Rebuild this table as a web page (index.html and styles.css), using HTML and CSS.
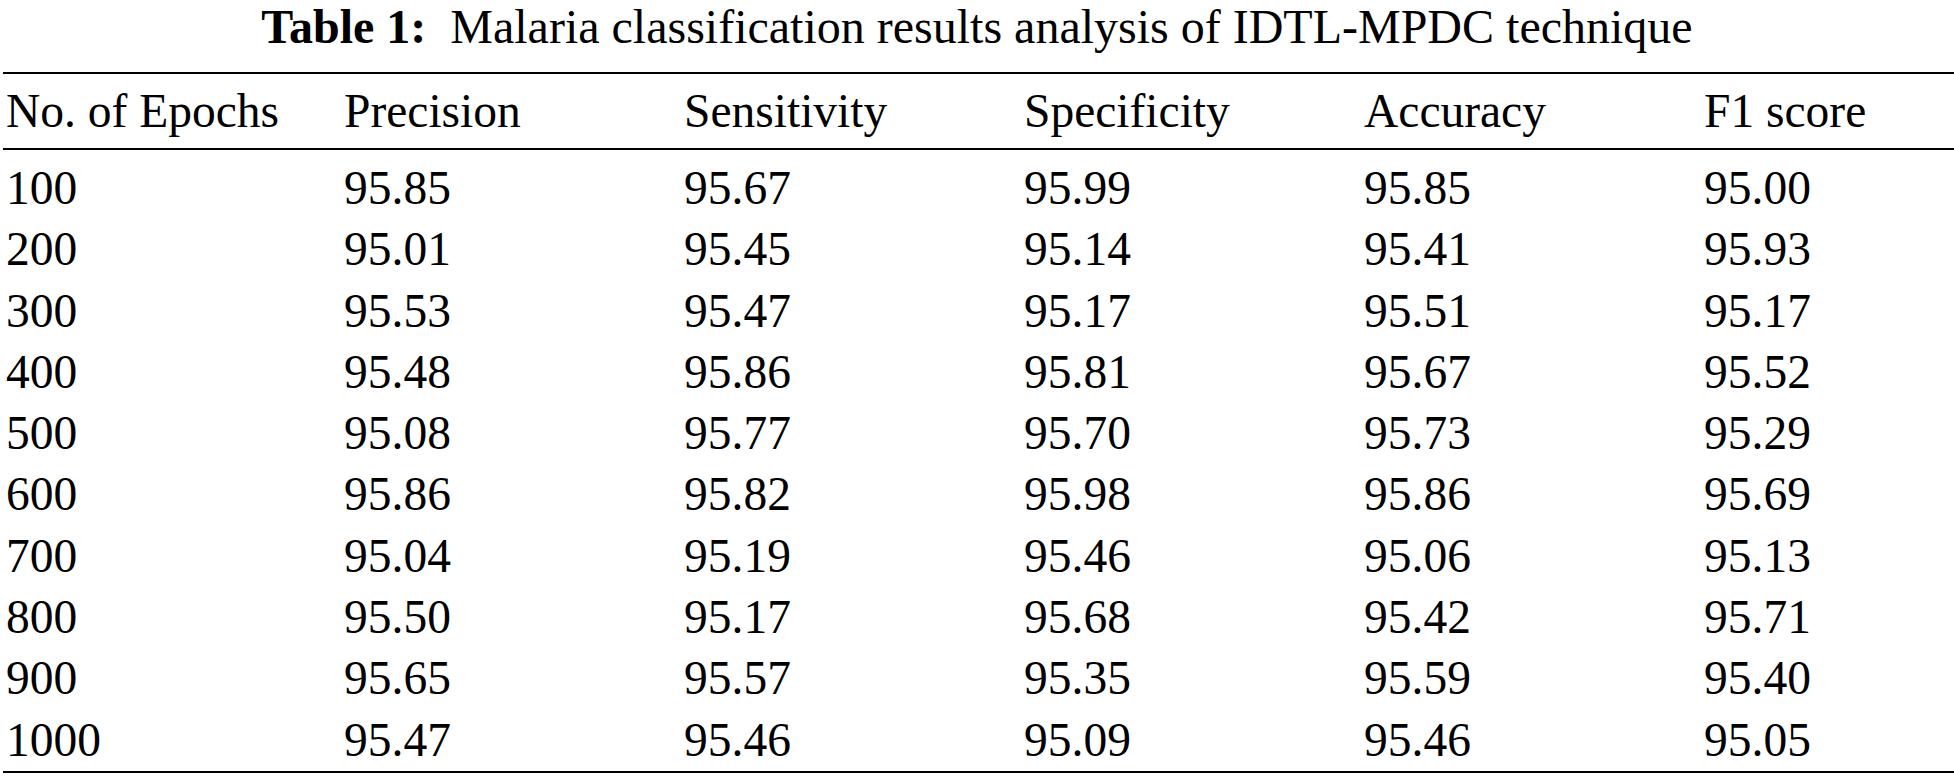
FILE: index.html
```html
<!DOCTYPE html>
<html>
<head>
<meta charset="utf-8">
<link rel="stylesheet" href="styles.css">
</head>
<body>
<div class="page">
  <div class="caption"><b>Table 1:</b>&nbsp; Malaria classification results analysis of IDTL-MPDC technique</div>
  <table class="results">
    <thead>
      <tr><th class="c1">No. of Epochs</th><th>Precision</th><th>Sensitivity</th><th>Specificity</th><th>Accuracy</th><th>F1 score</th></tr>
    </thead>
    <tbody>
      <tr class="first"><td>100</td><td>95.85</td><td>95.67</td><td>95.99</td><td>95.85</td><td>95.00</td></tr>
      <tr><td>200</td><td>95.01</td><td>95.45</td><td>95.14</td><td>95.41</td><td>95.93</td></tr>
      <tr><td>300</td><td>95.53</td><td>95.47</td><td>95.17</td><td>95.51</td><td>95.17</td></tr>
      <tr><td>400</td><td>95.48</td><td>95.86</td><td>95.81</td><td>95.67</td><td>95.52</td></tr>
      <tr><td>500</td><td>95.08</td><td>95.77</td><td>95.70</td><td>95.73</td><td>95.29</td></tr>
      <tr><td>600</td><td>95.86</td><td>95.82</td><td>95.98</td><td>95.86</td><td>95.69</td></tr>
      <tr><td>700</td><td>95.04</td><td>95.19</td><td>95.46</td><td>95.06</td><td>95.13</td></tr>
      <tr><td>800</td><td>95.50</td><td>95.17</td><td>95.68</td><td>95.42</td><td>95.71</td></tr>
      <tr><td>900</td><td>95.65</td><td>95.57</td><td>95.35</td><td>95.59</td><td>95.40</td></tr>
      <tr class="last"><td>1000</td><td>95.47</td><td>95.46</td><td>95.09</td><td>95.46</td><td>95.05</td></tr>
    </tbody>
  </table>
</div>
</body>
</html>
```
FILE: styles.css
```css
html, body {
  margin: 0;
  padding: 0;
  background: #ffffff;
}
body {
  font-family: "Liberation Serif", "Times New Roman", serif;
  color: #000000;
  width: 1954px;
  height: 779px;
  overflow: hidden;
}
.page {
  display: flex;
  flex-direction: column;
}
.caption {
  font-size: 48px;
  line-height: 53px;
  height: 72px;
  text-align: center;
}
.caption b {
  font-weight: bold;
}
.results {
  margin-left: 3px;
  width: 1951px;
  border-collapse: collapse;
  table-layout: fixed;
  font-size: 47.5px;
}
.results th,
.results td {
  padding: 0;
  text-align: left;
  font-weight: normal;
  white-space: nowrap;
}
.results th {
  height: 74px;
  line-height: 74px;
  border-top: 2px solid #000;
  border-bottom: 2px solid #000;
  width: 340px;
}
.results th.c1 {
  width: 338px;
  padding-left: 3px;
}
.results td {
  height: 61.3px;
  line-height: 61.3px;
}
.results td:first-child {
  padding-left: 3px;
}
.results tr.first td {
  padding-top: 8px;
}
.results tr.last td {
  border-bottom: 2px solid #000;
}
```
